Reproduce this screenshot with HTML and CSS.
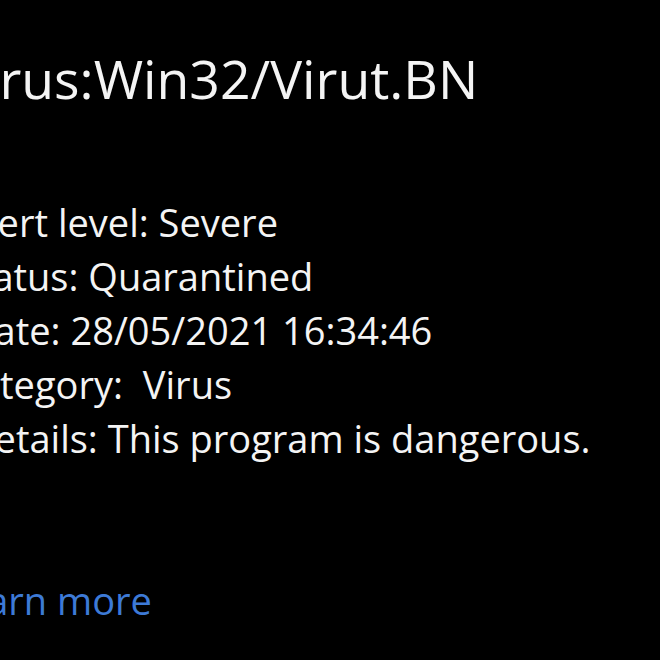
FILE: index.html
```html
<!DOCTYPE html>
<html lang="en">
<head>
<meta charset="utf-8">
<title>Virus:Win32/Virut.BN</title>
<link rel="stylesheet" href="styles.css">
</head>
<body>
<main class="page">
  <h1 class="threat-name">Virus:Win32/Virut.BN</h1>
  <ul class="details">
    <li class="row row-alert"><span class="label">Alert level:</span> <span class="value">Severe</span></li>
    <li class="row row-status"><span class="label">Status:</span> <span class="value">Quarantined</span></li>
    <li class="row row-date"><span class="label">Date:</span> <span class="value">28/05/2021 16:34:46</span></li>
    <li class="row row-category"><span class="label">Category:</span> <span class="value wide">Virus</span></li>
    <li class="row row-details"><span class="label">Details:</span> <span class="value">This program is dangerous.</span></li>
  </ul>
  <a class="learn-more" href="#">Learn more</a>
</main>
</body>
</html>
```
FILE: styles.css
```css
html, body {
  margin: 0;
  padding: 0;
  background: #000;
  overflow: hidden;
}

body {
  width: 660px;
  height: 660px;
  font-family: "Open Sans", "Noto Sans", "DejaVu Sans", sans-serif;
  color: #f4f4f4;
}

.page {
  display: flex;
  flex-direction: column;
  align-items: flex-start;
  margin-left: -33px;
  padding-top: 43px;
}

.threat-name {
  margin: 0;
  font-size: 53.5px;
  font-weight: 400;
  line-height: 72px;
  white-space: nowrap;
  text-indent: -13px;
}

.details {
  list-style: none;
  margin: 80px 0 0;
  padding: 0;
}

.row {
  font-size: 38px;
  line-height: 54px;
  white-space: nowrap;
}

.row-alert { text-indent: -3px; }
.row-status { text-indent: -9px; }
.row-date { text-indent: 0; }
.row-category { text-indent: -12px; }
.row-details { text-indent: 0; }

.value.wide {
  margin-left: 10px;
}

.learn-more {
  margin-top: 108px;
  margin-left: -21px;
  font-size: 38px;
  line-height: 54px;
  color: #3d7ad6;
  text-decoration: none;
  white-space: nowrap;
}
```
